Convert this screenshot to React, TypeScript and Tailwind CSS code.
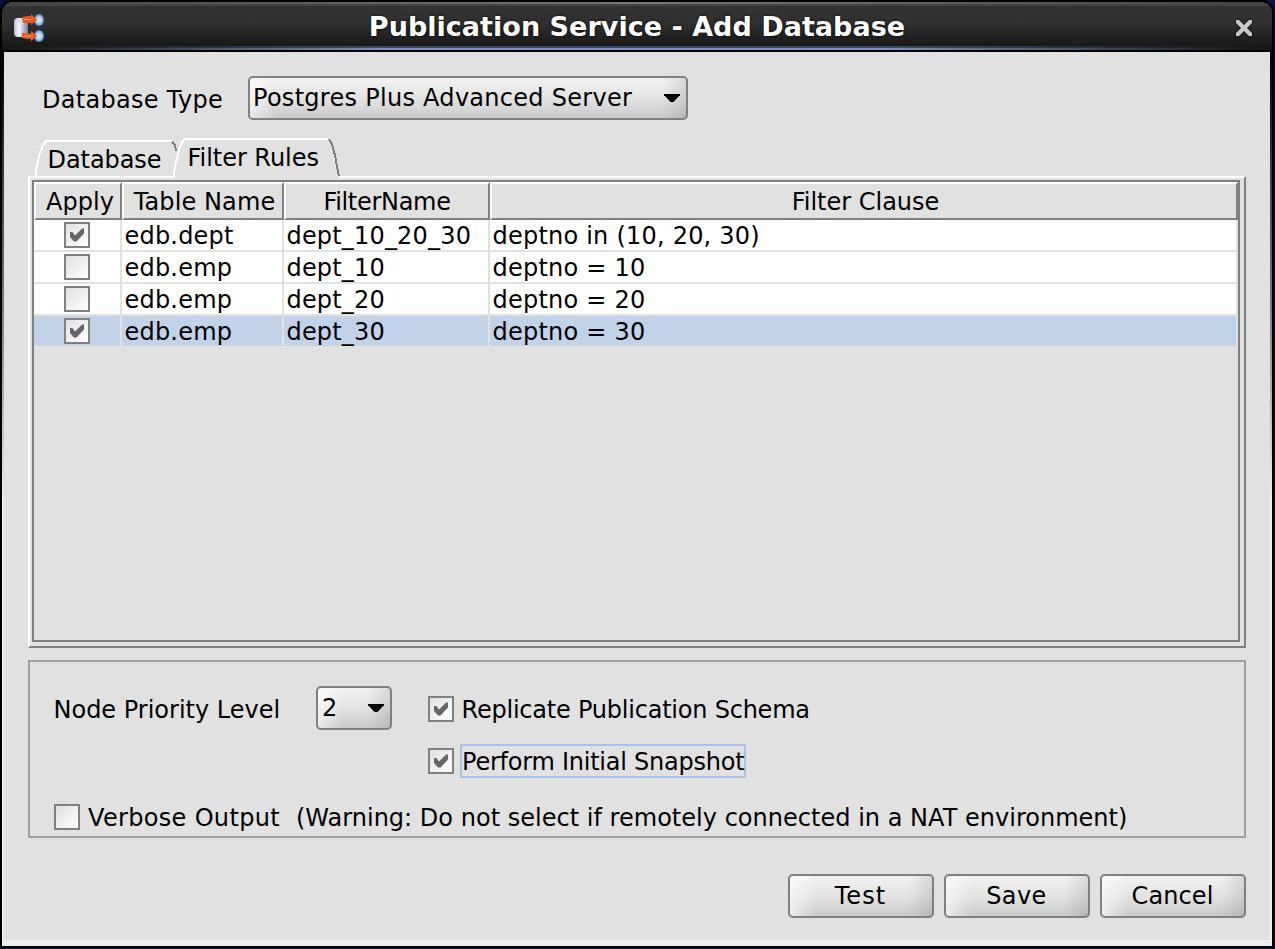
import React from "react";

const RAISED =
  "rounded-[5px] border-2 border-[#808080] bg-[linear-gradient(90deg,rgba(255,255,255,.6)_0,rgba(255,255,255,0)_26px,rgba(0,0,0,0)_calc(100%-24px),rgba(0,0,0,.1)_100%),linear-gradient(#f2f2f2_0%,#e3e3e3_50%,#cacaca_100%)]";

function Check({ on, className = "" }: { on?: boolean; className?: string }) {
  return (
    <span className={`block size-[26px] shrink-0 border-2 border-[#808080] bg-linear-to-br from-[#e0e0e0] to-white ${className}`}>
      {on && (
        <svg viewBox="0 0 22 22" className="size-[22px]">
          <path d="M4 8h2.500l2 3h1L16 4.500h2v5L10.500 17.500h-2.500L4 13z" fill="#666" />
        </svg>
      )}
    </span>
  );
}

function Combo({ value, className = "" }: { value: string; className?: string }) {
  return (
    <span className={`flex h-[44px] shrink-0 items-center justify-between pr-[6px] ${RAISED} ${className}`}>
      <span>{value}</span>
      <svg viewBox="0 0 16 8" className="h-2 w-4">
        <path d="M0 0h16v2h-1L9.500 8h-3L1 2H0z" fill="#000" />
      </svg>
    </span>
  );
}

function PushButton({ label, className = "" }: { label: string; className?: string }) {
  return <button className={`h-[44px] w-[146px] pr-[1px] ${RAISED} ${className}`}>{label}</button>;
}

const headers = [
  { label: "Apply", className: "pl-[2px] tracking-[0px]" },
  { label: "Table Name", className: "pl-px tracking-[0.1px]" },
  { label: "FilterName", className: "pr-[2px] tracking-[-0.3px]" },
  { label: "Filter Clause", className: "pl-px tracking-[0px]" },
];

const rows = [
  { on: true, table: "edb.dept", name: "dept_10_20_30", clause: "deptno in (10, 20, 30)" },
  { on: false, table: "edb.emp", name: "dept_10", clause: "deptno = 10" },
  { on: false, table: "edb.emp", name: "dept_20", clause: "deptno = 20" },
  { on: true, table: "edb.emp", name: "dept_30", clause: "deptno = 30", selected: true },
];

const COLS = "grid grid-cols-[88px_162px_206px_748px]";

export default function App() {
  return (
    <div className="h-[949px] w-[1275px] overflow-hidden bg-[#0b1440] pr-px pb-px font-['DejaVu_Sans',sans-serif] text-[24px] leading-[28px] whitespace-pre text-black">
      <div className="flex h-[948px] flex-col rounded-t-[12px] bg-black p-[2px]">
        <header className="relative flex h-[48px] shrink-0 rounded-t-[10px] bg-[linear-gradient(#333_0%,#303030_45%,#141414_100%)] pl-3">
          <div className="absolute inset-x-2 top-0 h-[2px] bg-[linear-gradient(90deg,#444,#777,#444)]" />
          <div className="absolute inset-x-1 top-[2px] h-[2px] bg-[#444]" />
          <div className="absolute inset-x-3 bottom-[2px] h-[2px] bg-[linear-gradient(90deg,transparent,#3b4a66_30%,#3b4a66_70%,transparent)]" />
          <div className="absolute inset-x-3 bottom-0 h-[2px] bg-[linear-gradient(90deg,transparent,#7890ba_30%,#7890ba_70%,transparent)]" />
          <svg viewBox="0 0 30 28" className="mt-[12px] h-7 w-[30px] shrink-0">
            <defs>
              <linearGradient id="cyl">
                <stop offset="0" stopColor="#b4b4cc" />
                <stop offset=".35" stopColor="#fafaff" />
                <stop offset="1" stopColor="#7c7ca0" />
              </linearGradient>
              <radialGradient id="ball">
                <stop offset="0" stopColor="#e4f2ff" />
                <stop offset=".6" stopColor="#a8ccf0" />
                <stop offset="1" stopColor="#5580b8" />
              </radialGradient>
            </defs>
            <rect x="0" y="4" width="14" height="19" rx="4" fill="url(#cyl)" />
            <ellipse cx="7" cy="7" rx="5" ry="2.500" fill="#dcdcec" />
            <ellipse cx="25" cy="6" rx="5" ry="6" fill="url(#ball)" />
            <ellipse cx="25" cy="22" rx="5" ry="6" fill="url(#ball)" />
            <path d="M8 3q4-1 9-1V0l6 5.500-6 5.500V9H9zM8 19q4 0 9 .5v-3l6 5.500-6 5.500v-2.500q-5 0-9-1z" fill="#e65a20" />
            <path d="M10 5.500h9M10 22h9" stroke="#ff9068" strokeWidth="1.200" />
          </svg>
          <h1 className="mt-[11px] ml-[323px] w-[540px] text-center text-[27px] font-bold tracking-[0.03px] text-white [text-shadow:0_0_3px_#000]">Publication Service - Add Database</h1>
          <svg viewBox="0 0 16 16" className="mt-[18px] ml-[329px] size-[16px] shrink-0 overflow-visible drop-shadow-[0_0_1px_#000]">
            <path d="M0 0h3L8 5l5-5h3v3l-5 5 5 5v3h-3l-5-5-5 5H0v-3l5-5-5-5z" fill="#c8c8c8" />
          </svg>
        </header>

        <div className="mt-[2px] flex-1 bg-[linear-gradient(#000_0%,#777_28%,#f0eeec_50%)] px-[2px]">
          <div className="h-[894px] border-b-[6px] border-[#edecea] bg-[#e1e1e1] pt-[24px]">
            <div className="flex items-center">
              <span className="ml-[38px] w-[206px] pt-[4px] tracking-[0.3px]">Database Type</span>
              <Combo value="Postgres Plus Advanced Server" className="w-[440px] pl-[3px] tracking-[0.28px]" />
            </div>

            <div className="relative mt-[19px] -mb-[2px] flex h-[39px]">
              <div className="relative mt-[2px] ml-[31px] w-[142px] pt-[5px] pl-[12.5px] tracking-[-0.07px]">
                <svg viewBox="0 0 142 37" className="absolute -top-px left-0 h-[37px] w-[142px]" fill="none" strokeWidth="2" shapeRendering="crispEdges">
                  <path d="M1 36v-6l2-9 2-9 3-7 3-4h126" stroke="#fff" />
                  <path d="M137 2l3 3 1 6" stroke="#808080" />
                </svg>
                <span className="relative">Database</span>
              </div>
              <div className="relative -ml-[4px] w-[168px] pt-[5px] pl-[14.5px] tracking-[-0.03px]">
                <svg viewBox="0 0 168 39" className="absolute -top-px left-0 h-[40px] w-[168px]" preserveAspectRatio="none" strokeWidth="2" shapeRendering="crispEdges">
                  <path d="M0 39v-2l3-14 5-18 3-4h145l3 4 4 18 3 16z" fill="#e1e1e1" />
                  <path d="M1 39v-5l2-10 3-12 3-8 3-3h144" fill="none" stroke="#fff" />
                  <path d="M156 1l3 5 3 11 2 11 2 9" fill="none" stroke="#808080" />
                </svg>
                <span className="relative">Filter Rules</span>
              </div>
            </div>

            <div className="ml-[24px] h-[472px] w-[1218px] border-2 border-t-white border-r-[#808080] border-b-[#808080] border-l-white p-[2px]">
              <div className="h-[462px] w-[1208px] border-2 border-[#808080]">
                <div className={COLS}>
                  {headers.map((h) => (
                    <div key={h.label} className="h-[38px] border-2 border-t-white border-r-[#808080] border-b-[#808080] border-l-white pt-[4px] pl-[2px] text-center">
                      <span className={h.className}>{h.label}</span>
                    </div>
                  ))}
                </div>
                {rows.map((r) => {
                  const cell = `border-r-2 border-b-2 border-[#e1e1e1] pt-[2px] ${r.selected ? "bg-[#c2d2e8]" : "bg-white"}`;
                  return (
                    <div key={r.name} className={`h-[32px] ${COLS}`}>
                      <div className={`pl-[30px] ${cell}`}><Check on={r.on} /></div>
                      <div className={`pl-[2.5px] tracking-[0.2px] ${cell}`}>{r.table}</div>
                      <div className={`pl-[2.5px] tracking-[0.18px] ${cell}`}>{r.name}</div>
                      <div className={`pl-[2.5px] tracking-[0.22px] ${cell}`}>{r.clause}</div>
                    </div>
                  );
                })}
              </div>
            </div>

            <div className="mt-[12px] ml-[24px] h-[178px] w-[1218px] border-2 border-[#a0a0a0] pt-[24px]">
              <div className="flex h-[44px]">
                <span className="w-[286px] pt-[10px] pl-[23.5px]">Node Priority Level</span>
                <Combo value="2" className="w-[76px] pl-[4px]" />
                <Check on className="mt-[10px] ml-[36px]" />
                <span className="mt-[10px] ml-[7.5px] tracking-[-0.22px]">Replicate Publication Schema</span>
              </div>
              <div className="mt-[14px] flex h-[34px] pl-[398px]">
                <Check on className="mt-[4px]" />
                <span className="ml-[6px] w-[286px] border-2 border-[#a4c4e8] pt-[2px] tracking-[-0.24px]">Perform Initial Snapshot</span>
              </div>
              <div className="mt-[26px] flex pl-[24px]">
                <Check />
                <span className="ml-[8px] tracking-[0.33px]">Verbose Output  </span>
                <span className="tracking-[0.02px]">(Warning: Do not select if remotely connected in a NAT environment)</span>
              </div>
            </div>

            <div className="mt-[36px] flex justify-end gap-[10px] pr-[24px]">
              <PushButton label="Test" className="tracking-[1.1px]" />
              <PushButton label="Save" className="tracking-[0.4px]" />
              <PushButton label="Cancel" className="tracking-[0.1px]" />
            </div>
          </div>
        </div>
      </div>
    </div>
  );
}
